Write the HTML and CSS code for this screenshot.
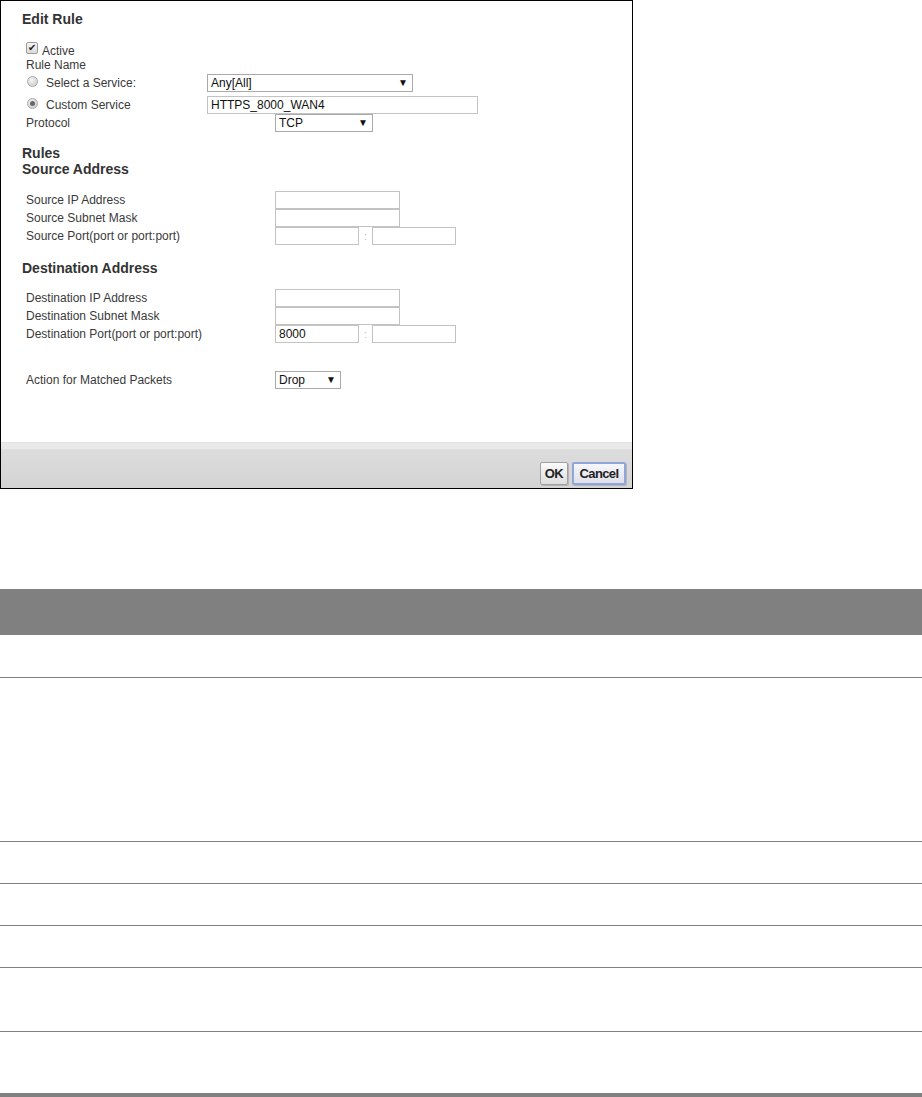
FILE: index.html
```html
<!DOCTYPE html>
<html lang="en">
<head>
    <meta charset="UTF-8">
    <title>Edit Rule</title>
    <link rel="stylesheet" href="styles.css">
</head>
<body>

    <div class="dialog">
        <div class="dialog-body">
            <div class="title">Edit Rule</div>

            <div class="row row-check"><span class="check">&#10004;</span>Active</div>
            <div class="row row-plain">Rule Name</div>

            <div class="row row-field first-field">
                <div class="label label-radio"><span class="radio"></span>Select a Service:</div>
                <div class="select sel-service">Any[All]<span class="arrow">&#9660;</span></div>
            </div>
            <div class="row row-field custom-field">
                <div class="label label-radio"><span class="radio on"></span>Custom Service</div>
                <div class="input input-service">HTTPS_8000_WAN4</div>
            </div>
            <div class="row row-field">
                <div class="label label-proto">Protocol</div>
                <div class="select sel-proto">TCP<span class="arrow">&#9660;</span></div>
            </div>

            <!-- Rules -->
            <div class="title section-rules">Rules</div>
            <div class="title">Source Address</div>

            <div class="group">
                <div class="row row-field">
                    <div class="label label-wide">Source IP Address</div>
                    <div class="input input-ip"></div>
                </div>
                <div class="row row-field">
                    <div class="label label-wide">Source Subnet Mask</div>
                    <div class="input input-ip"></div>
                </div>
                <div class="row row-field">
                    <div class="label label-wide">Source Port(port or port:port)</div>
                    <div class="input input-port"></div>
                    <span class="colon">:</span>
                    <div class="input input-port"></div>
                </div>
            </div>

            <div class="title section-dest">Destination Address</div>

            <div class="group group-dest">
                <div class="row row-field">
                    <div class="label label-wide">Destination IP Address</div>
                    <div class="input input-ip"></div>
                </div>
                <div class="row row-field">
                    <div class="label label-wide">Destination Subnet Mask</div>
                    <div class="input input-ip"></div>
                </div>
                <div class="row row-field">
                    <div class="label label-wide">Destination Port(port or port:port)</div>
                    <div class="input input-port">8000</div>
                    <span class="colon">:</span>
                    <div class="input input-port"></div>
                </div>
            </div>

            <div class="row row-field row-action">
                <div class="label label-wide">Action for Matched Packets</div>
                <div class="select sel-drop">Drop<span class="arrow">&#9660;</span></div>
            </div>
        </div>

        <div class="dialog-foot">
            <span class="btn btn-ok">OK</span>
            <span class="btn btn-focus">Cancel</span>
        </div>
    </div>

    <!-- description table -->
    <div class="table">
        <div class="t-head"></div>
        <div class="t-row" style="height: 42px"></div>
        <div class="t-row" style="height: 163px"></div>
        <div class="t-row" style="height: 41px"></div>
        <div class="t-row" style="height: 41px"></div>
        <div class="t-row" style="height: 41px"></div>
        <div class="t-row" style="height: 63px"></div>
        <div class="t-row t-last" style="height: 61px"></div>
    </div>

</body>
</html>
```

FILE: styles.css
```css
body {
    margin: 0;
    background-color: white;
    font-family: "Liberation Sans", Arial, sans-serif;
    font-size: 12px;
    color: #3a3a3a;
}

.dialog {
    width: 631px;
    height: 487px;
    border: 1px solid #000;
    display: flex;
    flex-direction: column;
    background-color: white;
}

.dialog-body {
    flex: 1;
    padding: 10px 0 0 21px;
}

.title {
    font-size: 14px;
    font-weight: bold;
    line-height: 16px;
    color: #333;
}

.section-rules {
    margin-top: 13px;
}

.section-dest {
    margin-top: 15px;
}

.row {
    display: flex;
    align-items: center;
    padding-left: 4px;
}

.row-check {
    margin-top: 17px;
    height: 14px;
}

.row-plain {
    height: 14px;
}

.row-field {
    height: 18px;
}

.first-field {
    margin-top: 2px;
}

.custom-field {
    margin-top: 4px;
}

.group {
    margin-top: 14px;
}

.group-dest {
    margin-top: 13px;
}

.row-action {
    margin-top: 28px;
}

.label {
    display: flex;
    align-items: center;
    flex-shrink: 0;
}

.label-radio {
    width: 181px;
    padding-left: 1px;
    box-sizing: border-box;
}

.label-proto {
    width: 249px;
}

.label-wide {
    width: 249px;
}

.check {
    width: 10px;
    height: 10px;
    border: 1px solid #9a9a9a;
    border-radius: 2px;
    background: linear-gradient(#f4f4f4, #dcdcdc);
    margin-right: 4px;
    margin-top: -6px;
    font-size: 10px;
    line-height: 10px;
    text-align: center;
    color: #222;
}

.radio {
    width: 9px;
    height: 9px;
    border: 1px solid #aaa;
    border-radius: 50%;
    background: radial-gradient(circle at 40% 35%, #f6f6f6, #c4c4c4);
    margin-right: 8px;
    margin-top: -3px;
    position: relative;
}

.radio.on::after {
    content: "";
    position: absolute;
    left: 2px;
    top: 2px;
    width: 5px;
    height: 5px;
    border-radius: 50%;
    background: #666;
}

.select, .input {
    box-sizing: border-box;
    height: 18px;
    border: 1px solid #a9a9a9;
    background-color: white;
    color: #111;
    font-size: 12px;
    line-height: 16px;
    padding-left: 3px;
    display: flex;
    align-items: center;
    justify-content: space-between;
}

.input {
    border-color: #c3c3c3;
}

.arrow {
    font-size: 10px;
    color: #111;
    padding-right: 4px;
}

.sel-service {
    width: 206px;
}

.input-service {
    width: 271px;
}

.sel-proto {
    width: 98px;
}

.sel-drop {
    width: 66px;
}

.input-ip {
    width: 125px;
}

.input-port {
    width: 84px;
}

.colon {
    width: 13px;
    text-align: center;
    color: #bbb;
    font-size: 11px;
}

.dialog-foot {
    height: 42px;
    border-top: 1px solid #e2e2e2;
    background: linear-gradient(#e9e9e9 0, #e9e9e9 6px, #d9d9d9 7px, #dcdcdc 8px, #d4d4d4 100%);
    display: flex;
    justify-content: flex-end;
    align-items: flex-end;
    gap: 4px;
    padding: 0 6px 3px 0;
}

.btn {
    box-sizing: border-box;
    height: 23px;
    border: 1px solid #a0a0a0;
    border-radius: 2px;
    background: linear-gradient(#fafafa, #dedede);
    font-size: 13px;
    font-weight: bold;
    letter-spacing: -0.6px;
    color: #222;
    display: flex;
    align-items: center;
    justify-content: center;
    box-shadow: 1px 1px 0 #b5b5b5;
}

.btn-ok {
    width: 28px;
}

.btn-focus {
    width: 54px;
    border: 2px solid #8fa6d8;
    background: linear-gradient(#f6f6fc, #e0e0ea);
}

.table {
    margin-top: 100px;
}

.t-head {
    height: 46px;
    background-color: #808080;
}

.t-row {
    border-bottom: 1px solid #808080;
}

.t-last {
    border-bottom: 4px solid #808080;
}
```
